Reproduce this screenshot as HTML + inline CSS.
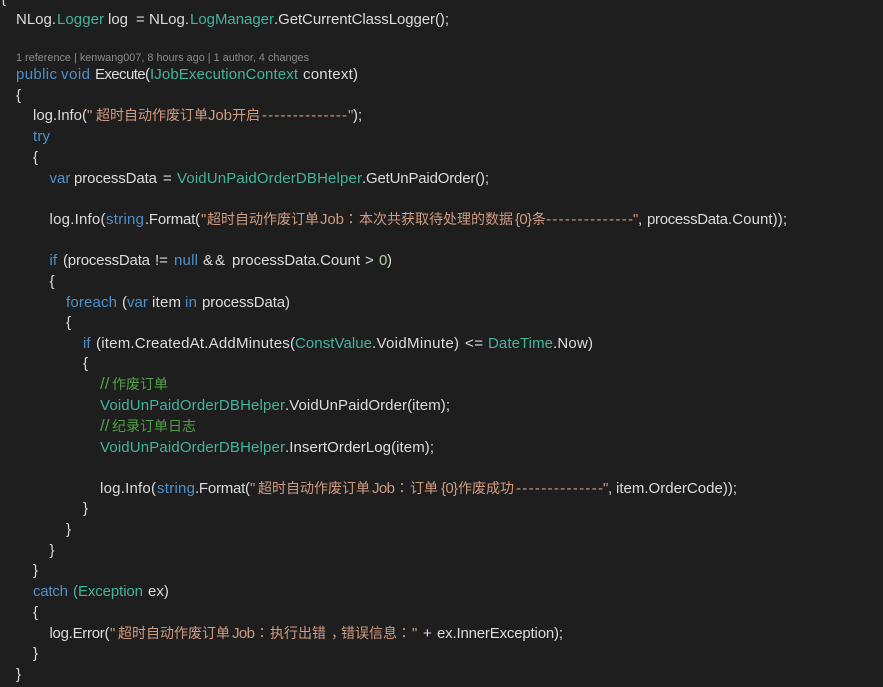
<!DOCTYPE html>
<html lang="zh">
<head>
<meta charset="utf-8">
<style>
html,body{margin:0;padding:0;background:#1e1e1e;}
svg{display:block;}
text{font-family:"Liberation Sans","Noto Sans CJK SC",sans-serif;font-size:15px;fill:#dcdcdc;white-space:pre;}
.k{fill:#4f90c8}.t{fill:#44b39c}.s{fill:#d09a80}.c{fill:#52a047}.n{fill:#b5cea8}
.z{font-size:14px}
.p{font-size:14px;font-family:"Noto Sans CJK TC",sans-serif;fill:#d09a80}
.m{font-size:10.8px;fill:#8c8c8c}
.y{font-size:17px}
</style>
</head>
<body>
<svg width="883" height="687" viewBox="0 0 883 687" xmlns="http://www.w3.org/2000/svg">
<rect width="883" height="687" fill="#1e1e1e"/>
<text x="1" y="3">{</text>

<text x="16" y="24" textLength="40">NLog.</text>
<text x="57" y="24" class="t" textLength="47">Logger</text>
<text x="108" y="24">log</text>
<text x="136" y="24" textLength="8">=</text>
<text x="149" y="24" textLength="40">NLog.</text>
<text x="190" y="24" class="t" textLength="84">LogManager</text>
<text x="274" y="24" textLength="175">.GetCurrentClassLogger();</text>

<text x="16" y="61" class="m" textLength="293">1 reference | kenwang007, 8 hours ago | 1 author, 4 changes</text>

<text x="16" y="79" class="k" textLength="41">public</text>
<text x="61" y="79" class="k" textLength="29">void</text>
<text x="95" y="79" textLength="55">Execute(</text>
<text x="150" y="79" class="t" textLength="148">IJobExecutionContext</text>
<text x="303" y="79" textLength="55">context)</text>

<text x="16" y="100">{</text>

<text x="33" y="120" textLength="54">log.Info(</text>
<text x="87" y="120" class="s">"</text>
<text x="96" y="120" class="s z">超时自动作废订单</text>
<text x="208" y="120" class="s" textLength="24">Job</text>
<text x="232" y="120" class="s z">开启</text>
<text x="262" y="120" class="s" textLength="85">--------------</text>
<text x="348" y="120" class="s">"</text>
<text x="353" y="120">);</text>

<text x="33" y="141" class="k" textLength="17">try</text>
<text x="33" y="162">{</text>

<text x="49.5" y="183" class="k">var</text>
<text x="74" y="183" textLength="83">processData</text>
<text x="163" y="183" textLength="8">=</text>
<text x="177" y="183" class="t" textLength="185">VoidUnPaidOrderDBHelper</text>
<text x="362" y="183" textLength="127">.GetUnPaidOrder();</text>

<text x="49.5" y="224" textLength="56">log.Info(</text>
<text x="106" y="224" class="k" textLength="38">string</text>
<text x="145" y="224" textLength="55">.Format(</text>
<text x="201" y="224" class="s">"</text>
<text x="207" y="224" class="s z">超时自动作废订单</text>
<text x="320" y="224" class="s" textLength="24">Job</text>
<text x="344" y="224" class="p">：</text>
<text x="359" y="224" class="s z">本次共获取待处理的数据</text>
<text x="515" y="224" class="s" textLength="17">{0}</text>
<text x="532" y="224" class="s z">条</text>
<text x="546" y="224" class="s" textLength="87">--------------</text>
<text x="633" y="224" class="s">"</text>
<text x="638" y="224">,</text>
<text x="647" y="224" textLength="81">processData</text>
<text x="728" y="224" textLength="59">.Count));</text>

<text x="49.5" y="265" class="k">if</text>
<text x="63" y="265" textLength="87">(processData</text>
<text x="155" y="265">!=</text>
<text x="174" y="265" class="k" textLength="24">null</text>
<text x="203" y="265" textLength="22">&amp;&amp;</text>
<text x="232" y="265" textLength="128">processData.Count</text>
<text x="365" y="265" textLength="8">&gt;</text>
<text x="379" y="265" class="n">0</text>
<text x="387" y="265">)</text>

<text x="49.5" y="286">{</text>

<text x="66" y="307" class="k" textLength="51">foreach</text>
<text x="122" y="307">(</text>
<text x="127" y="307" class="k">var</text>
<text x="152" y="307" textLength="29">item</text>
<text x="185" y="307" class="k" textLength="12">in</text>
<text x="202" y="307" textLength="88">processData)</text>

<text x="66" y="327">{</text>

<text x="83" y="348" class="k">if</text>
<text x="96" y="348" textLength="199">(item.CreatedAt.AddMinutes(</text>
<text x="295" y="348" class="t" textLength="77">ConstValue</text>
<text x="372" y="348" textLength="87">.VoidMinute)</text>
<text x="465" y="348" textLength="18">&lt;=</text>
<text x="488" y="348" class="t" textLength="65">DateTime</text>
<text x="553" y="348" textLength="40">.Now)</text>

<text x="83" y="368">{</text>

<text x="100" y="389" class="c y">//</text>
<text x="112" y="389" class="c z">作废订单</text>
<text x="100" y="410" class="t" textLength="185">VoidUnPaidOrderDBHelper</text>
<text x="285" y="410" textLength="165">.VoidUnPaidOrder(item);</text>
<text x="100" y="431" class="c y">//</text>
<text x="112" y="431" class="c z">纪录订单日志</text>
<text x="100" y="452" class="t" textLength="185">VoidUnPaidOrderDBHelper</text>
<text x="285" y="452" textLength="149">.InsertOrderLog(item);</text>

<text x="100" y="493" textLength="56">log.Info(</text>
<text x="157" y="493" class="k" textLength="38">string</text>
<text x="195" y="493" textLength="55">.Format(</text>
<text x="250" y="493" class="s">"</text>
<text x="258" y="493" class="s z">超时自动作废订单</text>
<text x="372" y="493" class="s" textLength="23">Job</text>
<text x="395" y="493" class="p">：</text>
<text x="410" y="493" class="s z">订单</text>
<text x="441" y="493" class="s" textLength="17">{0}</text>
<text x="458" y="493" class="s z">作废成功</text>
<text x="516" y="493" class="s" textLength="87">--------------</text>
<text x="603" y="493" class="s">"</text>
<text x="608" y="493">,</text>
<text x="616" y="493" textLength="121">item.OrderCode));</text>

<text x="83" y="513">}</text>
<text x="66" y="534">}</text>
<text x="49.5" y="555">}</text>
<text x="33" y="575">}</text>

<text x="33" y="596" class="k" textLength="35">catch</text>
<text x="73" y="596" class="t">(</text>
<text x="78" y="596" class="t" textLength="65">Exception</text>
<text x="148" y="596">ex)</text>

<text x="33" y="617">{</text>

<text x="49.5" y="638" textLength="60">log.Error(</text>
<text x="110" y="638" class="s">"</text>
<text x="118" y="638" class="s z">超时自动作废订单</text>
<text x="232" y="638" class="s" textLength="23">Job</text>
<text x="255" y="638" class="p">：</text>
<text x="270" y="638" class="s z">执行出错</text>
<text x="331" y="638" class="s z">，</text>
<text x="341" y="638" class="s z">错误信息</text>
<text x="397" y="638" class="p">：</text>
<text x="412" y="638" class="s">"</text>
<text x="423" y="638" textLength="8">+</text>
<text x="437" y="638" textLength="126">ex.InnerException);</text>

<text x="33" y="658">}</text>
<text x="16" y="679">}</text>
</svg>
</body>
</html>
